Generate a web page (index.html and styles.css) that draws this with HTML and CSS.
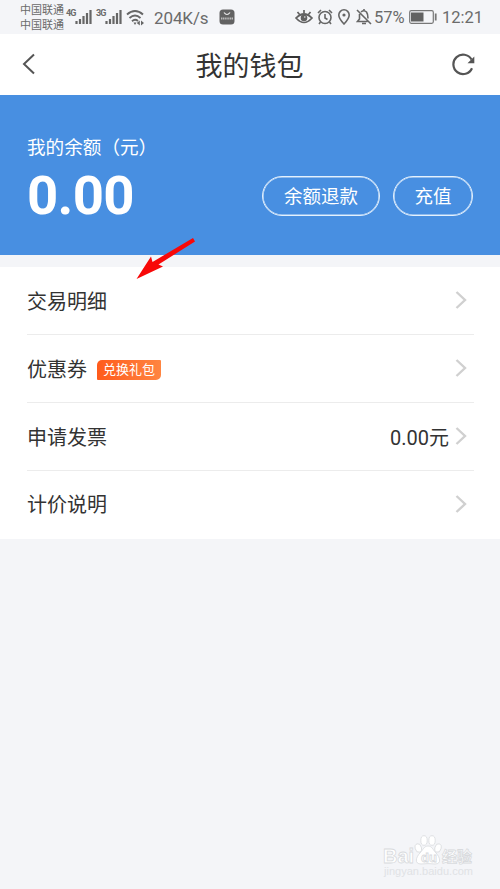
FILE: index.html
```
<!DOCTYPE html>
<html lang="zh-CN">
<head>
<meta charset="utf-8">
<title>我的钱包</title>
<link rel="stylesheet" href="styles.css">
</head>
<body>
<div class="status">
  <div class="carriers"><span>中国联通</span><span>中国联通</span></div>
  <div class="cell"><b>4G</b><svg width="17" height="16" viewBox="0 0 17 16"><path d="M1.500 12v3M5 10v5M8.500 7v8M12 4v11M15.500 1v14" stroke="#666" stroke-width="2.200"/></svg></div>
  <div class="cell second"><b>3G</b><svg width="17" height="16" viewBox="0 0 17 16"><path d="M1.500 12v3M5 10v5M8.500 7v8M12 4v11M15.500 1v14" stroke="#666" stroke-width="2.200"/></svg></div>
  <svg class="wifi" width="19" height="17" viewBox="0 0 19 17"><g fill="none" stroke="#666" stroke-width="1.900"><path d="M1 5.500Q9 -1.500 17 5.500M3.500 9Q9 4 14.500 9M6 12.200Q9 9.500 12 12"/></g><path d="M7.500 13.500h3L9 16zM13.800 11.500v5l-3-2.500zM15 11.500v5l3-2.500z" fill="#666"/></svg>
  <span class="speed">204K/s</span>
  <svg class="app" width="16" height="16" viewBox="0 0 16 16"><rect x=".5" y=".5" width="15" height="15" rx="3.500" fill="#626262"/><path d="M5 3.500q3 4 6 0" fill="none" stroke="#eee" stroke-width="1.200"/><path d="M2 9.500h12" stroke="#bbb" stroke-width="2" stroke-dasharray="1.300 .5"/></svg>
  <div class="right">
    <svg class="eye" width="18" height="16" viewBox="0 0 18 16"><g fill="none" stroke="#626262" stroke-width="1.700"><path d="M1 9Q9 1 17 9Q9 18 1 9zM9 1v3M2.500 3l2 2.500M15.500 3l-2 2.500"/></g><circle cx="9" cy="9" r="3.300" fill="#626262"/><circle cx="9.800" cy="8" r=".8" fill="#eee"/></svg>
    <svg class="alarm" width="16" height="16" viewBox="0 0 16 16"><g fill="none" stroke="#666" stroke-width="1.600"><circle cx="8" cy="8.500" r="6"/><path d="M8 5v4l2.500 1.500M1 4l3-3M15 4l-3-3M3.500 13L2 15M12.500 13l1.500 2"/></g></svg>
    <svg class="pin" width="12" height="16" viewBox="0 0 12 16"><path d="M6 15Q.8 9.500.8 6a5.200 5.200 0 0 1 10.400 0Q11.200 9.500 6 15z" fill="none" stroke="#666" stroke-width="1.600"/><circle cx="6" cy="6" r="1.600" fill="#666"/></svg>
    <svg class="bell" width="16" height="16" viewBox="0 0 16 16"><g fill="none" stroke="#666" stroke-width="1.600"><path d="M1 1l14 14M3.500 5v5L1.500 12.500h10M5 3Q8 .5 10.500 3Q12 5 12 9.500M8 0v2M6 14.500h4"/></g></svg>
    <span class="percent">57%</span>
    <svg class="battery" width="28" height="14" viewBox="0 0 28 14"><rect x=".7" y=".7" width="23.600" height="12.600" rx="1.500" fill="none" stroke="#777" stroke-width="1.200"/><path d="M2 2.500h12.500v9H2z" fill="#626262"/><path d="M26.700 3.500v7" stroke="#777" stroke-width="1.800"/></svg>
    <span class="clock">12:21</span>
  </div>
</div>
<header class="header">
  <svg class="back" width="14" height="22" viewBox="0 0 14 22"><path d="M12 1.500L2 11l10 9.500" fill="none" stroke="#555" stroke-width="2"/></svg>
  <h1>我的钱包</h1>
  <svg class="refresh" width="24" height="24" viewBox="0 0 24 24"><path d="M21 16.200A9.700 9.700 0 1 1 20.500 7.500" fill="none" stroke="#555" stroke-width="2.200"/><path d="M23.300 4.500v6.700h-6.800z" fill="#555"/></svg>
</header>
<section class="balance">
  <div class="amount"><p>我的余额（元）</p><strong>0.00</strong></div>
  <div class="actions"><button class="refund">余额退款</button><button class="recharge">充值</button></div>
</section>
<main class="list">
  <div class="row"><span class="label">交易明细</span><svg class="chevron" viewBox="0 0 12 18"><path d="M1.500 1l8.500 8-8.500 8"/></svg></div>
  <div class="row"><span class="label">优惠券</span><span class="tag">兑换礼包</span><svg class="chevron" viewBox="0 0 12 18"><path d="M1.500 1l8.500 8-8.500 8"/></svg></div>
  <div class="row"><span class="label">申请发票</span><span class="value">0.00元</span><svg class="chevron" viewBox="0 0 12 18"><path d="M1.500 1l8.500 8-8.500 8"/></svg></div>
  <div class="row"><span class="label">计价说明</span><svg class="chevron" viewBox="0 0 12 18"><path d="M1.500 1l8.500 8-8.500 8"/></svg></div>
</main>
<svg class="arrow" width="62" height="44" viewBox="0 0 62 44"><path d="M58 1L60 4.500 23.500 27.500 28 29.500 1.500 42 16 19.500 17.500 25z" fill="#f80808"/></svg>
<svg class="watermark" width="100" height="50" viewBox="0 0 100 50">
  <g fill="#fff" stroke="#d8dadd" stroke-width=".8">
    <text class="brand" x="2" y="29" textLength="31" lengthAdjust="spacingAndGlyphs">Bai</text>
    <ellipse cx="37.300" cy="14" rx="3.100" ry="4.300" transform="rotate(-15 37.300 14)"/><ellipse cx="43" cy="6.500" rx="3.200" ry="4.800"/><ellipse cx="51" cy="6.500" rx="3.200" ry="4.800"/><ellipse cx="57" cy="14" rx="3.100" ry="4.300" transform="rotate(15 57 14)"/>
    <path d="M47 12c4 0 5 4 8 7 4 4 6 11-1 11q-7-.8-14 0c-7 0-5-7-1-11 3-3 4-7 8-7z"/>
    <text class="du" x="40" y="28">du</text>
    <text class="cn" x="61" y="28" textLength="30" lengthAdjust="spacingAndGlyphs">经验</text>
  </g>
  <text class="domain" x="3" y="41" textLength="89">jingyan.baidu.com</text>
</svg>
</body>
</html>
```

FILE: styles.css
```
* { box-sizing: border-box; }
body {
  margin: 0;
  position: relative;
  width: 500px;
  height: 889px;
  overflow: hidden;
  background: #f4f5f8;
  color: #333;
  font-family: Roboto, "Noto Sans CJK SC", sans-serif;
}
svg { display: block; flex: none; }
.status {
  display: flex;
  align-items: center;
  height: 34px;
  padding-left: 20px;
  color: #6b6b6b;
  font-size: 17px;
  line-height: 20px;
  white-space: nowrap;
}
.carriers { display: flex; flex-direction: column; width: 46px; font-size: 11px; line-height: 15px; padding-top: 2px; }
.cell { display: flex; width: 26px; height: 18px; margin-top: -1px; }
.cell b { width: 9px; font: bold 9px/10px Roboto, sans-serif; letter-spacing: -.8px; }
.cell svg { margin-top: 1px; }
.second { margin-left: 4px; }
.wifi { margin-left: 4px; }
.speed { margin-left: 9px; width: 65px; padding-top: 1px; letter-spacing: -.1px; }
.right { display: flex; align-items: center; margin-left: 60px; }
.alarm { margin-left: 4px; }
.pin { margin-left: 5px; }
.bell { margin-left: 6px; }
.percent { margin-left: 2px; width: 35px; font-size: 16.500px; padding-top: 1px; }
.clock { margin-left: 5px; font-size: 16.500px; padding-top: 1px; }
.header {
  display: flex;
  align-items: center;
  justify-content: space-between;
  height: 60.500px;
  padding: 0 25px 0 22px;
  background: #fff;
}
.header h1 { margin: 0; padding: 5px 0 0 12px; font-size: 27px; line-height: 40px; font-weight: 400; }
.balance {
  display: flex;
  justify-content: space-between;
  height: 160px;
  padding: 0 27px;
  background: #488fe1;
  color: #fff;
}
.amount { padding-top: 39px; }
.amount p { margin: 0; font-size: 18.600px; line-height: 28px; }
.amount strong { display: block; font-size: 54.500px; line-height: 66px; letter-spacing: -.7px; }
.actions { display: flex; gap: 13px; padding-top: 81px; }
.actions button {
  height: 40px;
  padding: 2px 0 0;
  border: 1px solid #e4f1fd;
  border-radius: 20px;
  background: none;
  box-shadow: inset 0 0 0 .6px #d8e9fb;
  color: #fff;
  font: 18.500px/36px Roboto, "Noto Sans CJK SC", sans-serif;
}
.refund { width: 118px; }
.recharge { width: 80px; }
.list { margin-top: 12.500px; padding: 0 26px 0 27px; background: #fff; }
.row { display: flex; align-items: center; height: 68px; border-bottom: 1px solid #ececec; }
.row:last-child { border-bottom: 0; }
.label { padding-top: 2px; font-size: 20px; line-height: 30px; }
.row:last-child .label { padding-top: 0; }
.value { margin-left: auto; font-size: 20px; }
.tag {
  margin: 2px 0 0 10px;
  width: 64px;
  height: 20px;
  border-radius: 5px 1px;
  background: linear-gradient(90deg, #ff5b1c, #ff8541);
  color: #fff;
  font-size: 13px;
  line-height: 20px;
  text-align: center;
}
.chevron { width: 12px; height: 18px; margin: -2px 7px 0 auto; fill: none; stroke: #d0d0d0; stroke-width: 2.400; }
.value + .chevron { margin-left: 6px; }
.arrow { position: absolute; left: 135px; top: 237px; }
.watermark { position: absolute; left: 381px; top: 834px; }
.brand { font: bold 21px "Liberation Sans", sans-serif; }
.du { font: bold 13px "Liberation Sans", sans-serif; }
.cn { font: bold 15px "Noto Sans CJK SC", sans-serif; }
.domain { font: 11px "Liberation Sans", sans-serif; fill: #e0e2e5; }
```
